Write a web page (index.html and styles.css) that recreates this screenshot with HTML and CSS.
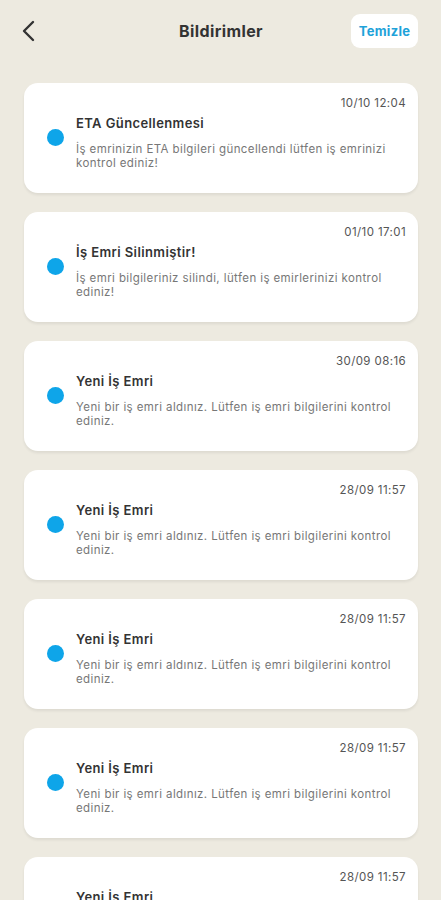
FILE: index.html
```html
<!DOCTYPE html>
<html lang="tr">
<head>
    <meta charset="UTF-8">
    <meta name="viewport" content="width=device-width, initial-scale=1.0">
    <title>Bildirimler</title>
    <link rel="stylesheet" href="styles.css">
</head>
<body>
    <div class="header">
        <button class="back" aria-label="Geri">
            <svg width="14" height="22" viewBox="0 0 14 22">
                <path d="M12 2 L3 11 L12 20" fill="none" stroke="#333" stroke-width="2.4" stroke-linecap="round" stroke-linejoin="round"/>
            </svg>
        </button>
        <div class="title">Bildirimler</div>
        <div class="actions">
            <button class="clear">Temizle</button>
        </div>
    </div>

    <div class="list">
        <div class="card">
            <div class="time">10/10 12:04</div>
            <div class="row">
                <span class="dot"></span>
                <div class="content">
                    <div class="card-title">ETA Güncellenmesi</div>
                    <div class="card-text">İş emrinizin ETA bilgileri güncellendi lütfen iş emrinizi kontrol ediniz!</div>
                </div>
            </div>
        </div>
        <div class="card">
            <div class="time">01/10 17:01</div>
            <div class="row">
                <span class="dot"></span>
                <div class="content">
                    <div class="card-title">İş Emri Silinmiştir!</div>
                    <div class="card-text">İş emri bilgileriniz silindi, lütfen iş emirlerinizi kontrol ediniz!</div>
                </div>
            </div>
        </div>
        <div class="card">
            <div class="time">30/09 08:16</div>
            <div class="row">
                <span class="dot"></span>
                <div class="content">
                    <div class="card-title">Yeni İş Emri</div>
                    <div class="card-text">Yeni bir iş emri aldınız. Lütfen iş emri bilgilerini kontrol ediniz.</div>
                </div>
            </div>
        </div>
        <div class="card">
            <div class="time">28/09 11:57</div>
            <div class="row">
                <span class="dot"></span>
                <div class="content">
                    <div class="card-title">Yeni İş Emri</div>
                    <div class="card-text">Yeni bir iş emri aldınız. Lütfen iş emri bilgilerini kontrol ediniz.</div>
                </div>
            </div>
        </div>
        <div class="card">
            <div class="time">28/09 11:57</div>
            <div class="row">
                <span class="dot"></span>
                <div class="content">
                    <div class="card-title">Yeni İş Emri</div>
                    <div class="card-text">Yeni bir iş emri aldınız. Lütfen iş emri bilgilerini kontrol ediniz.</div>
                </div>
            </div>
        </div>
        <div class="card">
            <div class="time">28/09 11:57</div>
            <div class="row">
                <span class="dot"></span>
                <div class="content">
                    <div class="card-title">Yeni İş Emri</div>
                    <div class="card-text">Yeni bir iş emri aldınız. Lütfen iş emri bilgilerini kontrol ediniz.</div>
                </div>
            </div>
        </div>
        <div class="card">
            <div class="time">28/09 11:57</div>
            <div class="row">
                <span class="dot"></span>
                <div class="content">
                    <div class="card-title">Yeni İş Emri</div>
                    <div class="card-text">Yeni bir iş emri aldınız. Lütfen iş emri bilgilerini kontrol ediniz.</div>
                </div>
            </div>
        </div>
    </div>
</body>
</html>
```

FILE: styles.css
```css
body {
    margin: 0;
    padding: 14px 23px 0 24px;
    font-family: Inter, "Noto Sans", sans-serif;
    background-color: #edeae0;
    color: #333;
}

.header {
    display: grid;
    grid-template-columns: 1fr auto 1fr;
    align-items: center;
    height: 34px;
}

.back {
    justify-self: start;
    display: flex;
    background: none;
    border: none;
    padding: 0;
    margin-left: -3px;
    cursor: pointer;
}

.title {
    font-size: 16px;
    font-weight: 700;
    letter-spacing: 0.4px;
    color: #333;
}

.actions {
    justify-self: end;
}

.clear {
    background-color: white;
    border: none;
    border-radius: 9px;
    height: 34px;
    width: 67px;
    padding: 0;
    font-family: inherit;
    font-size: 13px;
    font-weight: 700;
    letter-spacing: 0.3px;
    color: #1ea2d9;
    cursor: pointer;
}

.list {
    display: flex;
    flex-direction: column;
    gap: 19px;
    margin-top: 35px;
}

.card {
    background-color: white;
    border-radius: 14px;
    box-shadow: 0 2px 3px rgba(0, 0, 0, 0.07);
    padding: 13px 12px 23px 23px;
    height: 110px;
    box-sizing: border-box;
}

.time {
    text-align: right;
    font-size: 11.5px;
    letter-spacing: 0.4px;
    line-height: 14px;
    color: #555;
}

.row {
    display: flex;
    align-items: flex-start;
    gap: 12px;
    margin-top: 5px;
}

.dot {
    flex: none;
    width: 17px;
    height: 17px;
    border-radius: 50%;
    background-color: #0ea5e9;
    margin-top: 14px;
}

.content {
    flex: 1;
}

.card-title {
    font-size: 13px;
    font-weight: 600;
    letter-spacing: 0.4px;
    line-height: 16px;
    color: #333;
    margin-bottom: 11px;
}

.card-text {
    font-size: 11.5px;
    letter-spacing: 0.4px;
    line-height: 14px;
    color: #777;
}
```
